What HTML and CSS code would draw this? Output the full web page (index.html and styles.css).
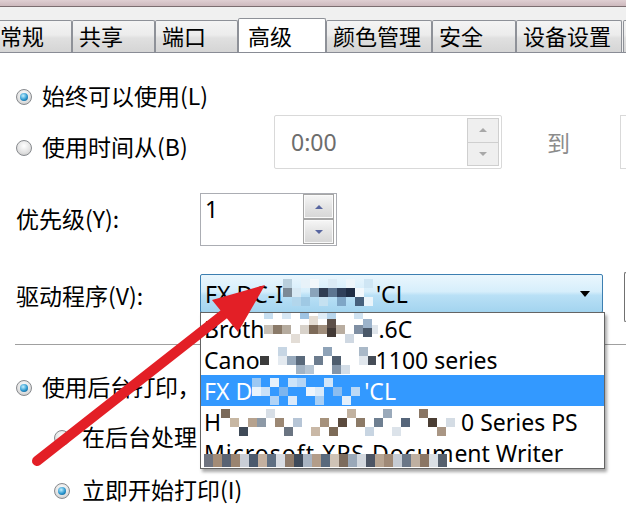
FILE: index.html
```html
<!DOCTYPE html>
<html lang="zh-CN">
<head>
  <meta charset="UTF-8" />
  <title>打印机属性 - 高级</title>
  <link rel="stylesheet" href="styles.css">
</head>
<body>

  <div class="titlebar"></div>

  <!-- TABS -->
  <div class="tabstrip">
    <div class="tab first">常规</div>
    <div class="tab w83">共享</div>
    <div class="tab w83">端口</div>
    <div class="tab active">高级</div>
    <div class="tab w106">颜色管理</div>
    <div class="tab w84">安全</div>
    <div class="tab w106">设备设置</div>
    <div class="tab last"></div>
  </div>

  <!-- PAGE -->
  <div class="page">

    <div class="row opt-always">
      <div class="choice"><span class="radio checked"></span><span class="txt">始终可以使用(L)</span></div>
    </div>

    <div class="row opt-time">
      <div class="choice wide"><span class="radio"></span><span class="txt">使用时间从(B)</span></div>
      <div class="spin spin-time">
        <span class="spin-value">0:00</span>
        <div class="spin-btns"><span><i class="up"></i></span><span><i class="down"></i></span></div>
      </div>
      <span class="to">到</span>
      <div class="spin spin-end"></div>
    </div>

    <div class="row opt-priority">
      <span class="field-label">优先级(Y):</span>
      <div class="spin spin-prio">
        <span class="spin-value">1</span>
        <div class="spin-btns"><span><i class="up"></i></span><span><i class="down"></i></span></div>
      </div>
    </div>

    <div class="row opt-driver">
      <span class="field-label">驱动程序(V):</span>
      <div class="combo">
        <span class="latin">FX DC-I</span><span class="mosaic"><svg width="93" height="37" viewBox="0 0 93 37">
          <rect x="0" y="4" width="9" height="9" fill="#b9cfdc"/><rect x="0" y="13" width="9" height="9" fill="#7c8a96"/>
          <rect x="9" y="13" width="9" height="9" fill="#d7e9f4"/><rect x="9" y="22" width="9" height="9" fill="#b2d6ec"/>
          <rect x="18" y="4" width="9" height="9" fill="#e7f2f9"/><rect x="18" y="22" width="9" height="9" fill="#9fc9e4"/>
          <rect x="27" y="13" width="9" height="9" fill="#8aa4bb"/><rect x="27" y="4" width="9" height="9" fill="#f3f8fb"/>
          <rect x="36" y="13" width="9" height="9" fill="#2f3d52"/><rect x="36" y="22" width="9" height="9" fill="#c5e1f1"/>
          <rect x="45" y="4" width="9" height="9" fill="#dcebf5"/><rect x="45" y="13" width="9" height="9" fill="#5d7590"/>
          <rect x="54" y="13" width="9" height="9" fill="#30405a"/><rect x="54" y="22" width="9" height="9" fill="#7fa6c6"/>
          <rect x="63" y="4" width="9" height="9" fill="#edf5fa"/><rect x="63" y="13" width="9" height="9" fill="#1f2d44"/>
          <rect x="72" y="13" width="9" height="9" fill="#f2f8fc"/><rect x="72" y="22" width="9" height="9" fill="#46607c"/>
          <rect x="81" y="4" width="9" height="9" fill="#cfe6f4"/><rect x="81" y="22" width="9" height="9" fill="#eaf4fa"/>
        </svg></span><span class="latin">'CL</span>
        <i class="combo-arrow"></i>

        <div class="droplist">
          <div class="item"><span class="latin">Broth</span><span class="mosaic"><svg width="114" height="31" viewBox="0 0 114 31">
            <rect x="0" y="0" width="9" height="6" fill="#c6def0"/><rect x="18" y="0" width="9" height="6" fill="#d6e7f4"/>
            <rect x="36" y="0" width="9" height="6" fill="#9ec3e2"/><rect x="54" y="0" width="9" height="6" fill="#e0edf7"/>
            <rect x="63" y="0" width="9" height="6" fill="#b7d5ec"/><rect x="90" y="0" width="9" height="6" fill="#cfe2f1"/>
            <rect x="0" y="12" width="9" height="9" fill="#c9c1b6"/><rect x="9" y="12" width="9" height="9" fill="#8a7a69"/>
            <rect x="18" y="12" width="9" height="9" fill="#b5ab9e"/><rect x="27" y="21" width="9" height="9" fill="#e3ddd6"/>
            <rect x="36" y="12" width="9" height="9" fill="#d8d2ca"/><rect x="45" y="3" width="9" height="9" fill="#e4dcd2"/>
            <rect x="45" y="12" width="9" height="9" fill="#7d6a58"/><rect x="54" y="12" width="9" height="9" fill="#a08e7c"/>
            <rect x="63" y="6" width="9" height="9" fill="#5d5049"/><rect x="63" y="15" width="9" height="9" fill="#433a36"/>
            <rect x="72" y="12" width="9" height="9" fill="#b9ada0"/><rect x="81" y="21" width="9" height="9" fill="#cfd8e2"/>
            <rect x="90" y="12" width="9" height="9" fill="#7f8fa3"/><rect x="99" y="6" width="9" height="9" fill="#9cb3cb"/>
            <rect x="99" y="15" width="9" height="9" fill="#4a5869"/><rect x="108" y="12" width="6" height="9" fill="#dfe5eb"/>
          </svg></span><span class="latin">.6C</span></div>

          <div class="item"><span class="latin">Cano</span><span class="mosaic"><svg width="116" height="31" viewBox="0 0 116 31">
            <rect x="0" y="12" width="9" height="9" fill="#3c3c3c"/><rect x="18" y="3" width="9" height="9" fill="#c7d6e4"/>
            <rect x="18" y="12" width="9" height="9" fill="#e4eaf0"/><rect x="27" y="12" width="9" height="9" fill="#97a9bc"/>
            <rect x="36" y="12" width="9" height="9" fill="#59697b"/><rect x="36" y="21" width="9" height="9" fill="#a2b3c4"/>
            <rect x="45" y="21" width="9" height="9" fill="#b7c6d4"/><rect x="54" y="12" width="9" height="9" fill="#6c7c8e"/>
            <rect x="63" y="3" width="9" height="9" fill="#8fa3b8"/><rect x="72" y="12" width="9" height="9" fill="#4e5d6e"/>
            <rect x="72" y="21" width="9" height="9" fill="#8495a8"/><rect x="81" y="21" width="9" height="9" fill="#d3dde7"/>
            <rect x="99" y="3" width="9" height="9" fill="#aab9c8"/><rect x="99" y="12" width="9" height="9" fill="#e1e7ed"/>
            <rect x="108" y="12" width="8" height="9" fill="#464d57"/>
          </svg></span><span class="latin">1100 series</span></div>

          <div class="item selected"><span class="latin">FX D</span><span class="mosaic"><svg width="112" height="31" viewBox="0 0 112 31">
            <rect x="0" y="3" width="9" height="9" fill="#9cc8f3"/><rect x="0" y="12" width="9" height="9" fill="#e9f3fc"/>
            <rect x="9" y="12" width="9" height="9" fill="#c9e1f8"/><rect x="18" y="3" width="9" height="9" fill="#e6f1fb"/>
            <rect x="18" y="21" width="9" height="9" fill="#b0d3f6"/><rect x="27" y="12" width="9" height="9" fill="#7db5ee"/>
            <rect x="36" y="21" width="9" height="9" fill="#dbeafa"/><rect x="36" y="3" width="9" height="9" fill="#cde4f9"/>
            <rect x="45" y="3" width="9" height="9" fill="#b5d5f5"/><rect x="54" y="12" width="9" height="9" fill="#eef5fc"/>
            <rect x="63" y="21" width="9" height="9" fill="#a9cff4"/><rect x="63" y="12" width="9" height="9" fill="#d9eafa"/>
            <rect x="72" y="3" width="9" height="9" fill="#d2e6f9"/><rect x="81" y="12" width="9" height="9" fill="#8bbdf0"/>
            <rect x="90" y="21" width="9" height="9" fill="#e3effb"/><rect x="99" y="12" width="9" height="9" fill="#bcd9f6"/>
          </svg></span><span class="latin">'CL</span></div>

          <div class="item"><span class="latin">H</span><span class="mosaic"><svg width="240" height="31" viewBox="0 0 240 31">
            <rect x="0" y="3" width="9" height="9" fill="#7b6a5a"/><rect x="9" y="12" width="9" height="9" fill="#c7b7a3"/>
            <rect x="18" y="21" width="9" height="9" fill="#3f4a58"/><rect x="27" y="12" width="9" height="9" fill="#b6a28e"/>
            <rect x="36" y="12" width="9" height="9" fill="#8d99a6"/><rect x="45" y="3" width="9" height="9" fill="#d7dee6"/>
            <rect x="54" y="12" width="9" height="9" fill="#9c8874"/><rect x="63" y="21" width="9" height="9" fill="#6a7481"/>
            <rect x="72" y="12" width="9" height="9" fill="#b6c5d6"/><rect x="90" y="21" width="9" height="9" fill="#c9b8a6"/>
            <rect x="99" y="12" width="9" height="9" fill="#a6927c"/><rect x="108" y="21" width="9" height="9" fill="#7d6b58"/>
            <rect x="117" y="12" width="9" height="9" fill="#5b4b3e"/><rect x="126" y="3" width="9" height="9" fill="#c2b2a0"/>
            <rect x="135" y="12" width="9" height="9" fill="#8c7a67"/><rect x="144" y="21" width="9" height="9" fill="#c8d5e2"/>
            <rect x="153" y="12" width="9" height="9" fill="#6e7f91"/><rect x="162" y="3" width="9" height="9" fill="#9aaabb"/>
            <rect x="171" y="21" width="9" height="9" fill="#dce3ea"/><rect x="180" y="12" width="9" height="9" fill="#55657a"/>
            <rect x="198" y="3" width="9" height="9" fill="#8a7664"/><rect x="207" y="12" width="9" height="9" fill="#4a3d33"/>
            <rect x="216" y="21" width="9" height="9" fill="#a99684"/><rect x="225" y="12" width="9" height="9" fill="#d4dce4"/>
          </svg></span><span class="latin">0 Series PS</span></div>

          <div class="item"><span class="latin blur">Microsoft XPS Docum<span class="mosaic-over"><svg width="252" height="13" viewBox="0 0 252 13">
            <rect x="0" y="0" width="9" height="13" fill="#6f7480"/><rect x="9" y="0" width="9" height="13" fill="#a48c76"/>
            <rect x="18" y="0" width="9" height="13" fill="#596373"/><rect x="27" y="0" width="9" height="13" fill="#9a8470"/>
            <rect x="36" y="0" width="9" height="13" fill="#c9ced6"/><rect x="45" y="0" width="9" height="13" fill="#4b5a6d"/>
            <rect x="54" y="0" width="9" height="13" fill="#c4b1a0"/><rect x="63" y="0" width="9" height="13" fill="#5f6f82"/>
            <rect x="72" y="0" width="9" height="13" fill="#d9dde3"/><rect x="81" y="0" width="9" height="13" fill="#8e7a69"/>
            <rect x="90" y="0" width="9" height="13" fill="#3e4a5a"/><rect x="99" y="0" width="9" height="13" fill="#a9b4c2"/>
            <rect x="108" y="0" width="9" height="13" fill="#b39d89"/><rect x="117" y="0" width="9" height="13" fill="#59697c"/>
            <rect x="126" y="0" width="9" height="13" fill="#cfc3b6"/><rect x="135" y="0" width="9" height="13" fill="#7c6b5c"/>
            <rect x="144" y="0" width="9" height="13" fill="#9aa8b8"/><rect x="153" y="0" width="9" height="13" fill="#d3d8de"/>
            <rect x="162" y="0" width="9" height="13" fill="#4c5564"/><rect x="171" y="0" width="9" height="13" fill="#b8a592"/>
            <rect x="180" y="0" width="9" height="13" fill="#a08a77"/><rect x="189" y="0" width="9" height="13" fill="#c6ccd4"/>
            <rect x="198" y="0" width="9" height="13" fill="#6b7787"/><rect x="207" y="0" width="9" height="13" fill="#bfb0a1"/>
            <rect x="216" y="0" width="9" height="13" fill="#8b7664"/><rect x="225" y="0" width="9" height="13" fill="#dadfe4"/>
            <rect x="234" y="0" width="9" height="13" fill="#56606d"/>
          </svg></span></span><span class="latin">ent Writer</span></div>
        </div>
      </div>
      <div class="side-button"></div>
    </div>

    <div class="separator"></div>

    <div class="row opt-spool">
      <div class="choice"><span class="radio checked"></span><span class="txt tight">使用后台打印，</span></div>
    </div>

    <div class="row opt-last">
      <div class="choice indent"><span class="radio"></span><span class="txt">在后台处理</span></div>
    </div>

    <div class="row opt-now">
      <div class="choice indent"><span class="radio checked"></span><span class="txt">立即开始打印(I)</span></div>
    </div>

  </div>

  <!-- red arrow drawn over the screenshot -->
  <svg class="arrow" width="626" height="518" viewBox="0 0 626 518">
    <line x1="37" y1="461" x2="228" y2="311" stroke="#e31f26" stroke-width="10" stroke-linecap="round"/>
    <polygon points="265,285 212,300 238,332" fill="#e31f26"/>
  </svg>

</body>
</html>
```

FILE: styles.css
```css
body {
  margin: 0;
  width: 626px;
  height: 518px;
  overflow: hidden;
  position: relative;
  background: #fff;
  color: #000;
  font-family: "Noto Sans CJK SC", "Noto Sans", sans-serif;
  font-size: 23px;
}

.latin {
  font-family: "Noto Sans", "Noto Sans CJK SC", sans-serif;
  font-size: 23px;
  white-space: nowrap;
}

/* Window title bar (just its bottom edge) */
.titlebar {
  height: 6px;
  background: linear-gradient(#dfcfd2, #cdb9bd);
  border-bottom: 1px solid #7b6d70;
}

/* Tabs */
.tabstrip {
  display: flex;
  align-items: flex-end;
  height: 46px;
  box-sizing: border-box;
  background: #f0f0f0;
  border-bottom: 1px solid #898c95;
  overflow: hidden;
}

.tab {
  flex-shrink: 0;
  box-sizing: border-box;
  height: 32px;
  line-height: 29px;
  padding-left: 6px;
  border: 1px solid #8e9198;
  border-bottom: none;
  border-radius: 2px 2px 0 0;
  background: linear-gradient(#f4f4f4, #ececec 45%, #e0e0e0 55%, #d5d5d5);
  font-size: 22px;
  white-space: nowrap;
}

.tab.first { width: 72px; padding-left: 0; border-left: none; border-radius: 0 2px 0 0; }
.tab.w83 { width: 83px; }
.tab.w84 { width: 84px; }
.tab.w106 { width: 106px; }
.tab.last { flex: 1; margin-left: 1px; }

.tab.active {
  width: 88px;
  height: 35px;
  margin-bottom: -1px;
  padding-left: 9px;
  line-height: 32px;
  background: #fff;
  position: relative;
}

/* Page rows */
.row {
  display: flex;
  align-items: center;
}

.row > * { flex-shrink: 0; }

.choice {
  display: flex;
  align-items: center;
  height: 30px;
  white-space: nowrap;
}

.choice .txt { margin-top: -4px; }
.tight { letter-spacing: -0.4px; }

.choice.wide { width: 274px; align-self: flex-start; margin-top: 18px; }

.radio {
  flex-shrink: 0;
  position: relative;
  width: 16px;
  height: 16px;
  box-sizing: border-box;
  margin: 0 10px 0 16px;
  border: 1px solid #878a8e;
  border-radius: 50%;
  background: radial-gradient(circle at 50% 35%, #ffffff, #e1e1e1 60%, #bdbdbd);
}

.radio.checked::after {
  content: "";
  position: absolute;
  left: 3px;
  top: 3px;
  width: 8px;
  height: 8px;
  border-radius: 50%;
  background: radial-gradient(circle at 40% 35%, #c2f0ff, #2b97cf 55%, #0d4a78);
}

.choice.indent .radio { margin-left: 54px; margin-right: 12px; }

.opt-always { margin-top: 29px; height: 30px; }
.opt-time { margin-top: 3px; height: 54px; align-items: flex-start; }
.opt-priority { margin-top: 24px; height: 53px; }
.opt-driver { margin-top: 26px; height: 50px; }
.opt-spool { margin-top: 28px; height: 30px; }
.opt-last { margin-top: 20px; height: 30px; }
.opt-now { margin-top: 23px; height: 30px; }

.field-label {
  width: 184px;
  padding-left: 16px;
  margin-top: -4px;
  white-space: nowrap;
}

/* Spin boxes */
.spin {
  display: flex;
  box-sizing: border-box;
  border: 1px solid #abadb3;
  background: #fff;
}

.spin-btns {
  display: flex;
  flex-direction: column;
  width: 32px;
}

.spin-btns span {
  flex: 1;
  display: flex;
  align-items: center;
  justify-content: center;
  box-sizing: border-box;
}

.up, .down {
  width: 0;
  height: 0;
  border-left: 4px solid transparent;
  border-right: 4px solid transparent;
}

.spin-time {
  width: 228px;
  height: 54px;
  padding: 2px 2px 2px 16px;
  border-color: #d9d9d9;
  border-radius: 2px;
}

.spin-time .spin-value {
  flex: 1;
  align-self: center;
  color: #6d6d6d;
  font-family: "Noto Sans", sans-serif;
  font-size: 23px;
}

.spin-time .spin-btns span {
  border: 1px solid #cfcfcf;
  background: #efefef;
}
.spin-time .spin-btns span + span { border-top: none; }
.spin-time .up { border-bottom: 4px solid #a8a8a8; }
.spin-time .down { border-top: 4px solid #a8a8a8; }

.to {
  margin: 12px 0 0 45px;
  line-height: 30px;
  color: #8c8c8c;
}

.row > .spin-end {
  flex: 1 1 auto;
  min-width: 0;
  height: 54px;
  margin-left: 50px;
  border-color: #d9d9d9;
  border-right: none;
}

.spin-prio {
  width: 137px;
  height: 53px;
  padding: 0 2px 1px 4px;
}

.spin-prio .spin-value {
  flex: 1;
  line-height: 30px;
  font-family: "Noto Sans", sans-serif;
  font-size: 23px;
}

.spin-prio .spin-btns { width: 31px; }

.spin-prio .spin-btns span {
  border: 1px solid #a5a5a5;
  box-shadow: inset 0 0 0 1px #fafafa;
  background: linear-gradient(#f6f6f6, #e4e4e4 50%, #d6d6d6);
}
.spin-prio .up { border-bottom: 4px solid #5866a0; }
.spin-prio .down { border-top: 4px solid #5866a0; }

/* Driver combo and its open list */
.combo {
  position: relative;
  align-self: flex-start;
  margin-top: 2px;
  width: 403px;
  height: 39px;
  box-sizing: border-box;
  display: flex;
  align-items: center;
  padding-left: 4px;
  border: 1px solid #3c7fb1;
  border-radius: 2px;
  background: linear-gradient(#eaf6fd, #d6eefb 45%, #b9e0f6 55%, #a3d4ef);
  z-index: 2;
}

.mosaic {
  display: inline-block;
  line-height: 0;
}

.combo-arrow {
  margin-left: auto;
  margin-right: 12px;
  width: 0;
  height: 0;
  border-left: 5px solid transparent;
  border-right: 5px solid transparent;
  border-top: 6px solid #000;
}

.droplist {
  position: absolute;
  left: -1px;
  top: 37px;
  width: 405px;
  box-sizing: border-box;
  border: 1px solid #646464;
  background: #fff;
  box-shadow: 2px 3px 3px rgba(0, 0, 0, 0.35);
}

.item {
  display: flex;
  align-items: center;
  height: 31px;
  padding-left: 3px;
  white-space: nowrap;
}

.item.selected {
  background: #3399ff;
  color: #fff;
}

.blur {
  position: relative;
  letter-spacing: 1px;
}

.mosaic-over {
  position: absolute;
  left: 0;
  top: 17px;
  line-height: 0;
}

.row > .side-button {
  flex: 1 1 auto;
  min-width: 0;
  height: 50px;
  margin-left: 21px;
  box-sizing: border-box;
  border: 1px solid #707070;
  border-right: none;
  border-radius: 3px 0 0 3px;
}

.separator {
  height: 1px;
  margin: 22px 0 0 15px;
  background: #a0a0a0;
}

/* Annotation arrow */
.arrow {
  position: absolute;
  left: 0;
  top: 0;
  z-index: 10;
  pointer-events: none;
}
```
